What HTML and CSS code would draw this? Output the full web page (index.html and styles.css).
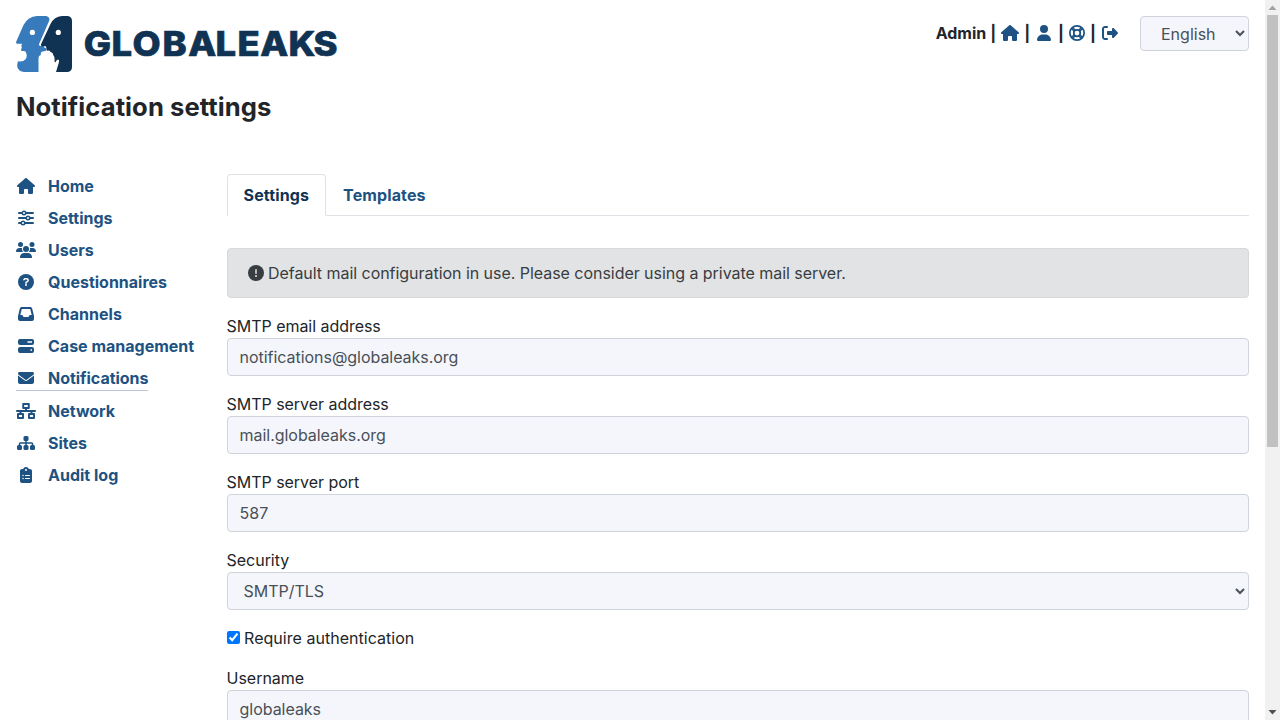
FILE: index.html
```html
<!DOCTYPE html>
<html lang="en">
<head>
<meta charset="utf-8">
<title>GlobaLeaks - Notification settings</title>
<link rel="stylesheet" href="styles.css">
</head>
<body>
<svg class="sprite" aria-hidden="true">
  <symbol id="house" viewBox="0 0 576 512"><path d="M575.8 255.5c0 18-15 32.1-32 32.1l-32 0 .7 160.2c0 2.7-.2 5.4-.5 8.1l0 16.2c0 22.1-17.9 40-40 40l-16 0c-1.1 0-2.2 0-3.3-.1c-1.4 .1-2.8 .1-4.2 .1L416 512l-24 0c-22.1 0-40-17.9-40-40l0-24 0-64c0-17.7-14.3-32-32-32l-64 0c-17.7 0-32 14.3-32 32l0 64 0 24c0 22.1-17.9 40-40 40l-24 0-31.9 0c-1.5 0-3-.1-4.5-.2c-1.2 .1-2.4 .2-3.6 .2l-16 0c-22.1 0-40-17.9-40-40l0-112c0-.9 0-1.9 .1-2.8l0-69.7-32 0c-18 0-32-14-32-32.1c0-9 3-17 10-24L266.4 8c7-7 15-8 22-8s15 2 21 7L564.8 231.5c8 7 12 15 11 24z"/></symbol>
  <symbol id="user" viewBox="0 0 448 512"><path d="M224 256A128 128 0 1 0 224 0a128 128 0 1 0 0 256zm-45.7 48C79.8 304 0 383.8 0 482.3C0 498.7 13.3 512 29.7 512l388.6 0c16.4 0 29.7-13.3 29.7-29.7C448 383.8 368.2 304 269.7 304l-91.4 0z"/></symbol>
  <symbol id="ring" viewBox="0 0 512 512"><g fill="none" stroke="currentColor" stroke-width="56"><circle cx="256" cy="256" r="228"/><circle cx="256" cy="256" r="104"/><path d="M86 122l89 89M122 86l89 89M426 122l-89 89M390 86l-89 89M86 390l89-89M122 426l89-89M426 390l-89-89M390 426l-89-89" stroke-width="44"/></g></symbol>
  <symbol id="logout" viewBox="0 0 512 512"><path d="M377.9 105.9L500.7 228.7c7.2 7.2 11.3 17.1 11.3 27.3s-4.1 20.1-11.3 27.3L377.9 406.1c-6.4 6.4-15 9.9-24 9.9c-18.7 0-33.9-15.2-33.9-33.9l0-62.1-128 0c-17.7 0-32-14.3-32-32l0-64c0-17.7 14.3-32 32-32l128 0 0-62.1c0-18.7 15.2-33.9 33.9-33.9c9 0 17.6 3.6 24 9.9zM160 96L96 96c-17.7 0-32 14.3-32 32l0 256c0 17.7 14.3 32 32 32l64 0c17.7 0 32 14.3 32 32s-14.3 32-32 32l-64 0c-53 0-96-43-96-96L0 128C0 75 43 32 96 32l64 0c17.7 0 32 14.3 32 32s-14.3 32-32 32z"/></symbol>
  <symbol id="sliders" viewBox="0 0 512 512"><g fill="none" stroke="currentColor" stroke-width="60" stroke-linecap="round"><path d="M30 96h98M256 96h226M30 256h226M384 256h98M30 416h66M224 416h258"/><circle cx="192" cy="96" r="56" stroke-width="48"/><circle cx="320" cy="256" r="56" stroke-width="48"/><circle cx="160" cy="416" r="56" stroke-width="48"/></g></symbol>
  <symbol id="users" viewBox="0 0 640 512"><circle cx="144" cy="80" r="80"/><circle cx="512" cy="80" r="80"/><circle cx="320" cy="224" r="96"/><path d="M21 320h214c-34-30-50-80-40-124-16-4-30-4-88-4C48 192 0 240 0 299q0 21 21 21zM405 320h214q21 0 21-21c0-59-48-107-107-107-58 0-72 0-88 4 10 44-6 94-40 124zM261 352h118c73 0 133 60 133 133q0 27-27 27H155q-27 0-27-27c0-73 60-133 133-133z"/></symbol>
  <symbol id="question" viewBox="0 0 512 512"><circle cx="256" cy="256" r="256"/><path d="M190 184q12-30 44-30h44q48 0 48 46 0 26-26 42l-44 26v24" fill="none" stroke="#fff" stroke-width="48" stroke-linecap="round"/><circle cx="256" cy="352" r="32" fill="#fff"/></symbol>
  <symbol id="inbox" viewBox="0 0 512 512"><path fill-rule="evenodd" d="M121 32C92 32 66 52 59 81L2 308q-2 8-2 16v92c0 35 29 64 64 64h384c35 0 64-29 64-64v-92q0-8-2-16L453 81c-7-29-33-49-62-49H121zm0 64h270l48 192h-51q-18 0-28 18l-15 29q-10 17-28 17H195q-18 0-28-17l-15-29q-10-18-28-18H73L121 96z"/></symbol>
  <symbol id="server" viewBox="0 0 512 512"><path fill-rule="evenodd" d="M64 32h384a64 64 0 0 1 64 64v64a64 64 0 0 1-64 64H64a64 64 0 0 1-64-64V96a64 64 0 0 1 64-64zm240 72v48h144v-48zM64 288h384a64 64 0 0 1 64 64v64a64 64 0 0 1-64 64H64a64 64 0 0 1-64-64v-64a64 64 0 0 1 64-64zm336 72v48h48v-48z"/></symbol>
  <symbol id="mail" viewBox="0 0 512 512"><path d="M48 64C21.500 64 0 85.500 0 112c0 15.100 7.100 29.300 19.200 38.400L236.800 313.600c11.400 8.500 27 8.500 38.400 0L492.800 150.400c12.100-9.100 19.200-23.300 19.200-38.400c0-26.500-21.500-48-48-48L48 64zM0 176L0 384c0 35.300 28.700 64 64 64l384 0c35.300 0 64-28.700 64-64l0-208L294.400 339.200c-22.800 17.100-54 17.100-76.800 0L0 176z"/></symbol>
  <symbol id="network" viewBox="0 0 640 512"><g fill="none" stroke="currentColor" stroke-width="62" stroke-linejoin="round"><path d="M231 31h178v130H231zM63 351h162v130H63zM415 351h162v130H415zM320 161v95M144 256v95M496 256v95"/><path d="M30 256h580" stroke-linecap="round"/></g></symbol>
  <symbol id="sitemap" viewBox="0 0 576 512"><rect x="208" y="32" width="160" height="160" rx="48"/><rect y="320" width="160" height="160" rx="48"/><rect x="208" y="320" width="160" height="160" rx="48"/><rect x="416" y="320" width="160" height="160" rx="48"/><path d="M288 180v150M80 330v-50q0-24 24-24h368q24 0 24 24v50" fill="none" stroke="currentColor" stroke-width="48"/></symbol>
  <symbol id="clipboard" viewBox="0 0 384 512"><path fill-rule="evenodd" d="M192 0c-42 0-77 27-91 64H64C29 64 0 93 0 128v320c0 35 29 64 64 64h256c35 0 64-29 64-64V128c0-35-29-64-64-64h-37c-14-37-49-64-91-64zm0 64a32 32 0 1 1 0 64 32 32 0 1 1 0-64zM72 272a24 24 0 1 1 48 0 24 24 0 1 1-48 0zm104-16h128q16 0 16 16t-16 16H176q-16 0-16-16t16-16zM72 368a24 24 0 1 1 48 0 24 24 0 1 1-48 0zm88 0q0-16 16-16h128q16 0 16 16t-16 16H176q-16 0-16-16z"/></symbol>
  <symbol id="exclaim" viewBox="0 0 512 512"><circle cx="256" cy="256" r="256"/><path d="M256 152v112" stroke="#e2e3e5" stroke-width="48" stroke-linecap="round"/><circle cx="256" cy="352" r="32" fill="#e2e3e5"/></symbol>
</svg>
<div class="shell">
  <div class="page">
    <header class="top">
      <svg class="logo" width="322" height="56" viewBox="0 0 322 56">
        <path class="head-light" d="M21 0h9q4 1 3.300 4.500L23.300 27.500q-.8 2 .8 2.500h3.700l.6 1.800 1.600.4q1 2-.8 2.800l-3.400.8q-1.300.7-1 3.200-2.300.5-2.300 3V56H8q-5-.5-6.500-4.500-.8-3 .5-6.300 5 .8 7.300-1.700 2-2.500 1.200-5.500Q10.200 35.200 8 35H5.400L5 33l1-1-.7-1.700.7-2.500H1Q-.3 27.300.2 25.800L7.500 9Q12 .5 21 0z"/>
        <path class="head-dark" d="M46 0h5.500q4.500.5 4.500 5v46q0 4.500-4.500 5H40l3-10q.4-2.700-1-2.600-1.700.2-2.700 3.200l-.8-1q.5-5-1.300-6.600 0-2.500-2.500-3-1.500-2-3.700-1.200-1-.8-.5-2l-.6-2.600H26q-1.500-.7-1-2L34.500 8Q38 .5 46 0z"/>
        <circle class="eye" cx="16.400" cy="16.400" r="2.600"/><circle class="eye" cx="42.300" cy="16.400" r="2.600"/>
        <text class="brand" transform="scale(1.07 1)" y="40" x="63.400 89.300 108.800 137 161 186.500 207 228.300 254.700 278">GLOBALEAKS</text>
      </svg>
      <div class="account">
        <div class="links"><span>Admin</span><span class="first">|</span><svg class="i18"><use href="#house"/></svg><span>|</span><svg class="i18 person"><use href="#user"/></svg><span>|</span><svg class="i16"><use href="#ring"/></svg><span>|</span><svg class="i16 exit"><use href="#logout"/></svg></div>
        <select class="language"><option>English</option></select>
      </div>
    </header>
    <h1>Notification settings</h1>
    <div class="columns">
      <nav class="side">
        <a><svg><use href="#house"/></svg>Home</a>
        <a><svg><use href="#sliders"/></svg>Settings</a>
        <a><svg><use href="#users"/></svg>Users</a>
        <a><svg><use href="#question"/></svg>Questionnaires</a>
        <a><svg><use href="#inbox"/></svg>Channels</a>
        <a><svg><use href="#server"/></svg>Case management</a>
        <a class="current"><svg><use href="#mail"/></svg>Notifications</a>
        <a><svg><use href="#network"/></svg>Network</a>
        <a><svg><use href="#sitemap"/></svg>Sites</a>
        <a><svg><use href="#clipboard"/></svg>Audit log</a>
      </nav>
      <main>
        <div class="tabs"><a class="tab active">Settings</a><a class="tab">Templates</a></div>
        <div class="alert"><svg><use href="#exclaim"/></svg><span>Default mail configuration in use. Please consider using a private mail server.</span></div>
        <div class="group"><label>SMTP email address</label><input class="control" value="notifications@globaleaks.org"></div>
        <div class="group"><label>SMTP server address</label><input class="control" value="mail.globaleaks.org"></div>
        <div class="group"><label>SMTP server port</label><input class="control" value="587"></div>
        <div class="group"><label>Security</label><select class="control"><option>SMTP/TLS</option></select></div>
        <div class="group check"><input type="checkbox" checked><label>Require authentication</label></div>
        <div class="group"><label>Username</label><input class="control" value="globaleaks"></div>
      </main>
    </div>
  </div>
  <div class="scrollbar"><svg width="15" height="15"><path d="M3.500 10h8L7.500 5.500z" fill="#a3a3a3"/></svg><div class="thumb"></div><svg width="15" height="15"><path d="M3.500 5h8L7.500 9.500z" fill="#505050"/></svg></div>
</div>
</body>
</html>
```

FILE: styles.css
```css
* { box-sizing: border-box; }
body { margin: 0; font: 16px/24px Inter, sans-serif; color: #212529; background: #fff; }
.sprite { position: absolute; width: 0; height: 0; }
svg { fill: currentColor; flex: none; }
.shell { display: flex; height: 720px; overflow: hidden; }
.page { flex: 1; padding: 16px 16px 0; }
.top { display: flex; justify-content: space-between; height: 56px; }
.logo { display: block; }
.head-light { fill: #377bbc; }
.head-dark { fill: #103253; }
.eye { fill: #fff; }
.brand { font: 800 34px Inter, sans-serif; fill: #103253; stroke: #103253; stroke-width: .7px; }
.account { display: flex; align-items: flex-start; gap: 22px; }
.links { display: flex; align-items: center; gap: 5px; height: 34px; font-weight: 700; }
.links svg { height: 16px; color: #1d5282; }
.first { margin-left: -1px; }
.i18 { width: 18px; }
.person { margin: 0 .5px 0 -.5px; }
.i16 { width: 16px; }
.exit { margin-left: 1px; }
select, input { font: inherit; }
.language, .control { background-color: #f4f6fb; color: #495057; border: 1px solid #ced4da; border-radius: 4px; }
.language { width: 109px; height: 35px; padding: 0 0 0 16px; }
h1 { margin: 19px 0 0; font-size: 25.6px; line-height: 32px; font-weight: 700; letter-spacing: .08px; }
.columns { display: flex; margin-top: 51px; }
.side { width: 210.600px; flex: none; display: flex; flex-direction: column; align-items: flex-start; gap: 8px; }
.side a { display: flex; align-items: center; gap: 12px; height: 24px; font-weight: 700; color: #1d5282; white-space: nowrap; }
.side svg { width: 20px; height: 16px; }
.side .current { height: 25px; border-bottom: 1px solid #b9c8d8; letter-spacing: -.03px; }
main { flex: 1; letter-spacing: -.04px; }
.tabs { display: flex; height: 42px; border-bottom: 1px solid #dee2e6; margin-bottom: 32px; letter-spacing: .12px; }
.tab { padding: 8px 16px; height: 42px; border: 1px solid transparent; font-weight: 700; color: #1d5282; }
.active { background: #fff; color: #103253; border-color: #dee2e6 #dee2e6 #fff; border-radius: 4px 4px 0 0; }
.alert { display: flex; align-items: center; gap: 4.400px; height: 50px; padding: 0 20px; margin-bottom: 16px; border: 1px solid #d6d8db; border-radius: 4px; background: #e2e3e5; color: #383d41; }
.alert svg { width: 16px; height: 16px; }
.group { margin-bottom: 16px; }
.group label { display: block; }
.control { display: block; width: 100%; height: 38px; padding: 6px 12px; letter-spacing: inherit; }
.check { display: flex; align-items: center; gap: 4.500px; letter-spacing: .03px; }
.check input { margin: 0 0 1px; width: 13px; height: 13px; }
.scrollbar { width: 15px; display: flex; flex-direction: column; background: #f1f1f1; }
.thumb { width: 11px; height: 432px; margin: 0 2px auto; background: #c1c1c1; }
```
